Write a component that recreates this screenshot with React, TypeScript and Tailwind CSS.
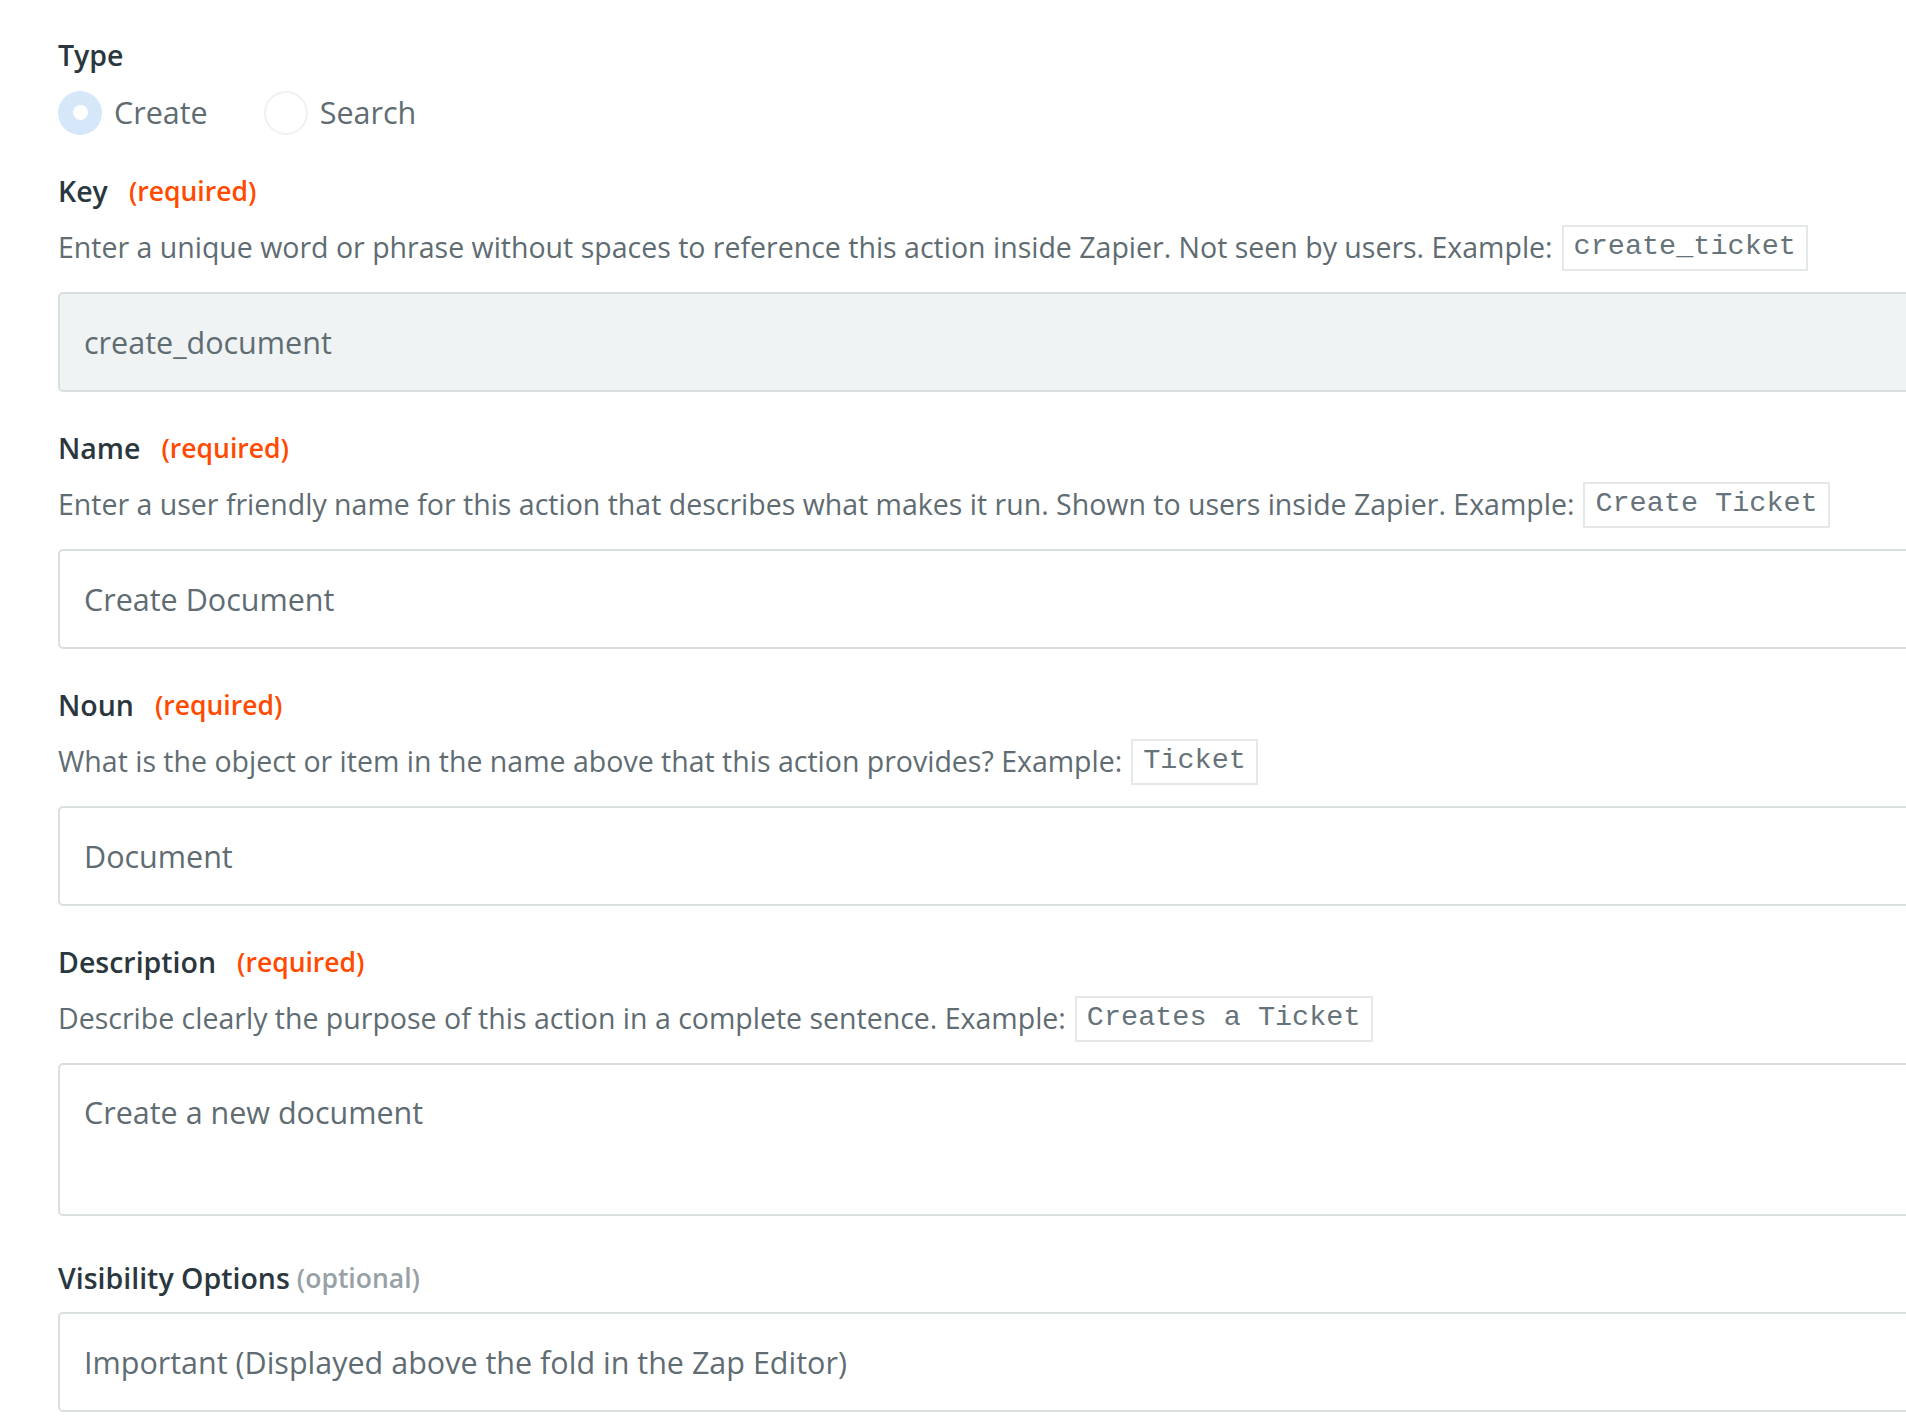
import React from "react";

const sans = "font-['Open_Sans','Noto_Sans',sans-serif]";
const mono = "font-['Liberation_Mono','Courier_New',monospace]";

function Label({ text, tag, optional }: { text: string; tag: string; optional?: boolean }) {
  return (
    <div className="flex h-[40px] items-center">
      <span className="text-[28.5px] font-semibold text-[#2b373e]">{text}</span>
      {optional ? (
        <span className="ml-[7px] text-[26.5px] font-semibold text-[#97a1a6]">{tag}</span>
      ) : (
        <span className="ml-[21px] text-[26.5px] font-semibold text-[#ff4a00]">{tag}</span>
      )}
    </div>
  );
}

function Help({ text, example }: { text: string; example: string }) {
  return (
    <div className="mt-[13px] flex h-[46px] items-center text-[28.5px] text-[#5f6c72]">
      <span>{text}</span>
      <code className={`${mono} ml-[9px] flex h-[46px] items-center whitespace-pre border-2 border-[#e5e8e9] px-[10px] text-[28.5px] text-[#66737a]`}>
        {example}
      </code>
    </div>
  );
}

function Field({ value, disabled, tall }: { value: string; disabled?: boolean; tall?: boolean }) {
  return (
    <div
      className={`mt-[21px] w-[1880px] rounded-[5px] border-2 border-[#d9dfe1] px-[24px] text-[30.5px] leading-[48px] text-[#5f6c72] ${
        disabled ? "bg-[#eff3f4]" : "bg-white"
      } ${tall ? "h-[153px] pt-[23px]" : "h-[100px] py-[24px]"}`}
    >
      {value}
    </div>
  );
}

export default function App() {
  return (
    <div className={`${sans} min-h-screen w-full overflow-hidden bg-white pl-[58px] pt-[35px]`}>
      {/* Type */}
      <div className="flex h-[40px] items-center text-[28.5px] font-semibold text-[#2b373e]">Type</div>
      <div className="mt-[15px] flex items-center">
        <label className="flex items-center">
          <span className="flex h-[44px] w-[44px] items-center justify-center rounded-full bg-[#d5e7f9]">
            <span className="h-[15px] w-[15px] rounded-full bg-white" />
          </span>
          <span className="ml-[12px] text-[30.5px] text-[#5f6c72]">Create</span>
        </label>
        <label className="ml-[56px] flex items-center">
          <span className="h-[44px] w-[44px] rounded-full border-2 border-[#eef0f1] bg-white" />
          <span className="ml-[12px] text-[30.5px] text-[#5f6c72]">Search</span>
        </label>
      </div>

      {/* Key */}
      <div className="mt-[36px]">
        <Label text="Key" tag="(required)" />
        <Help
          text="Enter a unique word or phrase without spaces to reference this action inside Zapier. Not seen by users. Example:"
          example="create_ticket"
        />
        <Field value="create_document" disabled />
      </div>

      {/* Name */}
      <div className="mt-[37px]">
        <Label text="Name" tag="(required)" />
        <Help
          text="Enter a user friendly name for this action that describes what makes it run. Shown to users inside Zapier. Example:"
          example="Create Ticket"
        />
        <Field value="Create Document" />
      </div>

      {/* Noun */}
      <div className="mt-[37px]">
        <Label text="Noun" tag="(required)" />
        <Help
          text="What is the object or item in the name above that this action provides? Example:"
          example="Ticket"
        />
        <Field value="Document" />
      </div>

      {/* Description */}
      <div className="mt-[37px]">
        <Label text="Description" tag="(required)" />
        <Help
          text="Describe clearly the purpose of this action in a complete sentence. Example:"
          example="Creates a Ticket"
        />
        <Field value="Create a new document" tall />
      </div>

      {/* Visibility */}
      <div className="mt-[43px]">
        <Label text="Visibility Options" tag="(optional)" optional />
        <div className="mt-[13px] h-[100px] w-[1880px] rounded-[5px] border-2 border-[#d9dfe1] bg-white px-[24px] py-[24px] text-[30.5px] leading-[48px] text-[#5f6c72]">
          Important (Displayed above the fold in the Zap Editor)
        </div>
      </div>
    </div>
  );
}
